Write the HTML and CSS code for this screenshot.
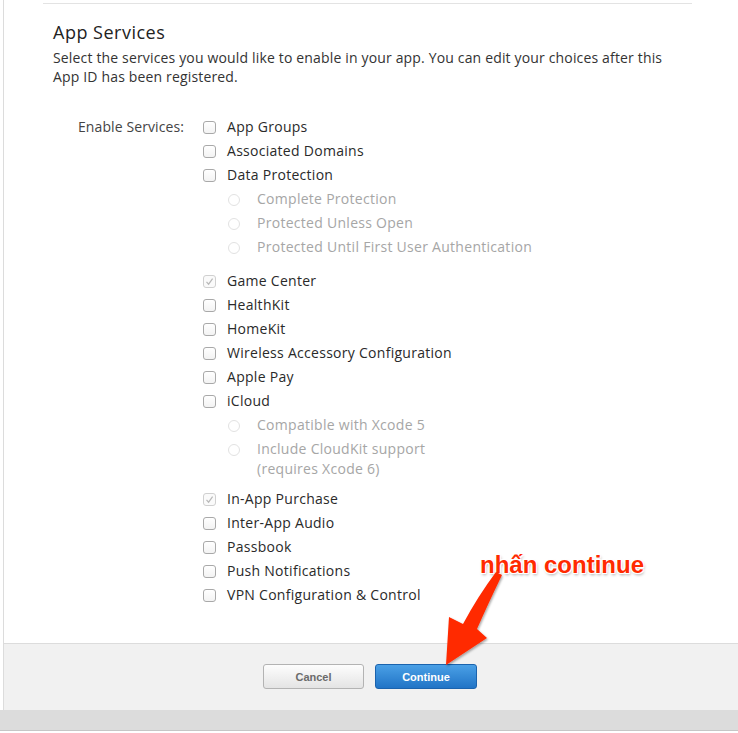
FILE: index.html
```html
<!DOCTYPE html>
<html>
<head>
<meta charset="utf-8">
<link rel="stylesheet" href="styles.css">
</head>
<body>
<div class="page">
  <div class="panel">
    <div class="content">
      <div class="rule"></div>
      <h2 class="title">App Services</h2>
      <p class="desc">Select the services you would like to enable in your app. You can edit your choices after this App ID has been registered.</p>
      <div class="form">
        <div class="form-label">Enable Services:</div>
        <div class="options">
          <div class="row"><span class="cb"></span><span class="txt">App Groups</span></div>
          <div class="row"><span class="cb"></span><span class="txt">Associated Domains</span></div>
          <div class="row"><span class="cb"></span><span class="txt">Data Protection</span></div>
          <div class="group">
            <div class="row sub"><span class="radio"></span><span class="txt">Complete Protection</span></div>
            <div class="row sub"><span class="radio"></span><span class="txt">Protected Unless Open</span></div>
            <div class="row sub"><span class="radio"></span><span class="txt">Protected Until First User Authentication</span></div>
          </div>
          <div class="row"><span class="cb checked"><svg viewBox="0 0 13 13" width="13" height="13"><path d="M3.5 6.8 L5.6 9.2 L9.6 3.6" fill="none" stroke="#b8b8b8" stroke-width="1.2"/></svg></span><span class="txt">Game Center</span></div>
          <div class="row"><span class="cb"></span><span class="txt">HealthKit</span></div>
          <div class="row"><span class="cb"></span><span class="txt">HomeKit</span></div>
          <div class="row"><span class="cb"></span><span class="txt">Wireless Accessory Configuration</span></div>
          <div class="row"><span class="cb"></span><span class="txt">Apple Pay</span></div>
          <div class="row"><span class="cb"></span><span class="txt">iCloud</span></div>
          <div class="group group-short">
            <div class="row sub"><span class="radio"></span><span class="txt">Compatible with Xcode 5</span></div>
            <div class="row sub"><span class="radio"></span><span class="txt">Include CloudKit support<br>(requires Xcode 6)</span></div>
          </div>
          <div class="row"><span class="cb checked"><svg viewBox="0 0 13 13" width="13" height="13"><path d="M3.5 6.8 L5.6 9.2 L9.6 3.6" fill="none" stroke="#b8b8b8" stroke-width="1.2"/></svg></span><span class="txt">In-App Purchase</span></div>
          <div class="row"><span class="cb"></span><span class="txt">Inter-App Audio</span></div>
          <div class="row"><span class="cb"></span><span class="txt">Passbook</span></div>
          <div class="row"><span class="cb"></span><span class="txt">Push Notifications</span></div>
          <div class="row"><span class="cb"></span><span class="txt">VPN Configuration &amp; Control</span></div>
        </div>
      </div>
    </div>
    <div class="footer">
      <button class="btn btn-cancel">Cancel</button>
      <button class="btn btn-continue">Continue</button>
    </div>
  </div>
  <div class="strip"></div>
  <div class="annotation">
    <div class="note">nhấn continue</div>
    <svg class="arrow" width="738" height="733" viewBox="0 0 738 733">
      <defs>
        <filter id="sh" x="-20%" y="-20%" width="140%" height="140%">
          <feDropShadow dx="1" dy="1.5" stdDeviation="1.2" flood-color="#000" flood-opacity="0.35"/>
        </filter>
      </defs>
      <path filter="url(#sh)" fill="#ff2a00" d="M496 572 L502 575 Q488 604 477 629 L487 638 L446 665 L449 617 L463 624 Q478 596 496 572 Z"/>
    </svg>
  </div>
</div>
</body>
</html>
```

FILE: styles.css
```css
* { box-sizing: border-box; }
html, body { margin: 0; padding: 0; background: #fff; }
body {
  font-family: "Open Sans", "Noto Sans", sans-serif;
  color: #333;
  width: 738px;
  height: 733px;
  overflow: hidden;
}
.page { position: relative; width: 738px; height: 733px; }
.panel {
  margin-left: 3px;
  border-left: 1px solid #dcdcdc;
  height: 710px;
  display: flex;
  flex-direction: column;
}
.content {
  flex: 1;
  padding: 3px 0 0 49px;
}
.rule {
  margin-left: -10px;
  width: 649px;
  border-top: 1px solid #e3e3e3;
}
.title {
  margin: 16px 0 0;
  font-size: 18px;
  line-height: 24px;
  font-weight: normal;
  color: #222;
  letter-spacing: 0.5px;
}
.desc {
  margin: 4px 0 0;
  font-size: 14px;
  line-height: 19px;
  width: 625px;
  color: #333;
  letter-spacing: 0.16px;
}
.form {
  display: flex;
  margin-top: 29px;
  font-size: 14px;
  letter-spacing: 0.28px;
}
.form-label {
  width: 131px;
  text-align: right;
  padding-top: 2px;
  line-height: 20px;
  color: #444;
  margin-right: 19px;
  letter-spacing: 0.1px;
}
.options { display: flex; flex-direction: column; }
.row {
  display: flex;
  align-items: flex-start;
  padding: 2px 0;
  line-height: 20px;
  color: #2a2a2a;
}
.cb {
  width: 13px;
  height: 13px;
  margin-top: 4px;
  border: 1px solid #a9a9a9;
  border-radius: 3px;
  background: linear-gradient(#fff, #f3f3f3);
  margin-right: 11px;
  flex: none;
  position: relative;
}
.cb.checked { border-color: #d0d0d0; background: #fafafa; }
.cb svg { position: absolute; left: -1px; top: -1px; }
.sub { padding-left: 25px; }
.sub .txt { color: #a6a6a6; }
.radio {
  width: 12px;
  height: 12px;
  margin-top: 5px;
  border: 1px solid #e2e2e2;
  border-radius: 50%;
  background: #fff;
  margin-right: 17px;
  flex: none;
}
.group { margin-bottom: 10px; }
.group-short { margin-bottom: 6px; }
.footer {
  height: 67px;
  border-top: 1px solid #dcdcdc;
  background: #f1f1f1;
  display: flex;
  justify-content: center;
  align-items: flex-start;
  gap: 11px;
  padding: 20px 2px 0 0;
}
.btn {
  height: 25px;
  border-radius: 3px;
  font-family: "Liberation Sans", Arial, sans-serif;
  font-weight: bold;
  font-size: 11px;
  padding: 0;
}
.btn-cancel {
  width: 101px;
  border: 1px solid #b3b3b3;
  background: linear-gradient(#fdfdfd, #e4e4e4);
  color: #6b6b6b;
}
.btn-continue {
  width: 102px;
  border: 1px solid #1b63ad;
  background: linear-gradient(#4aa0e6, #2174c6);
  color: #fff;
}
.strip {
  height: 21px;
  background: #dcdcdc;
  border-bottom: 1px solid #c6c6c6;
}
.annotation { position: absolute; left: 0; top: 0; width: 738px; height: 733px; pointer-events: none; }
.note {
  position: absolute;
  left: 480px;
  top: 551px;
  font-family: "Liberation Sans", Arial, sans-serif;
  font-weight: bold;
  font-size: 24px;
  line-height: 28px;
  color: #ff2a00;
  text-shadow: -1px -1px 0 #fff, 1px -1px 0 #fff, -1px 1px 0 #fff, 1px 1px 0 #fff, 0 0 2px #fff, 1px 2px 3px rgba(0,0,0,0.35);
  white-space: nowrap;
}
.arrow { position: absolute; left: 0; top: 0; }
```
